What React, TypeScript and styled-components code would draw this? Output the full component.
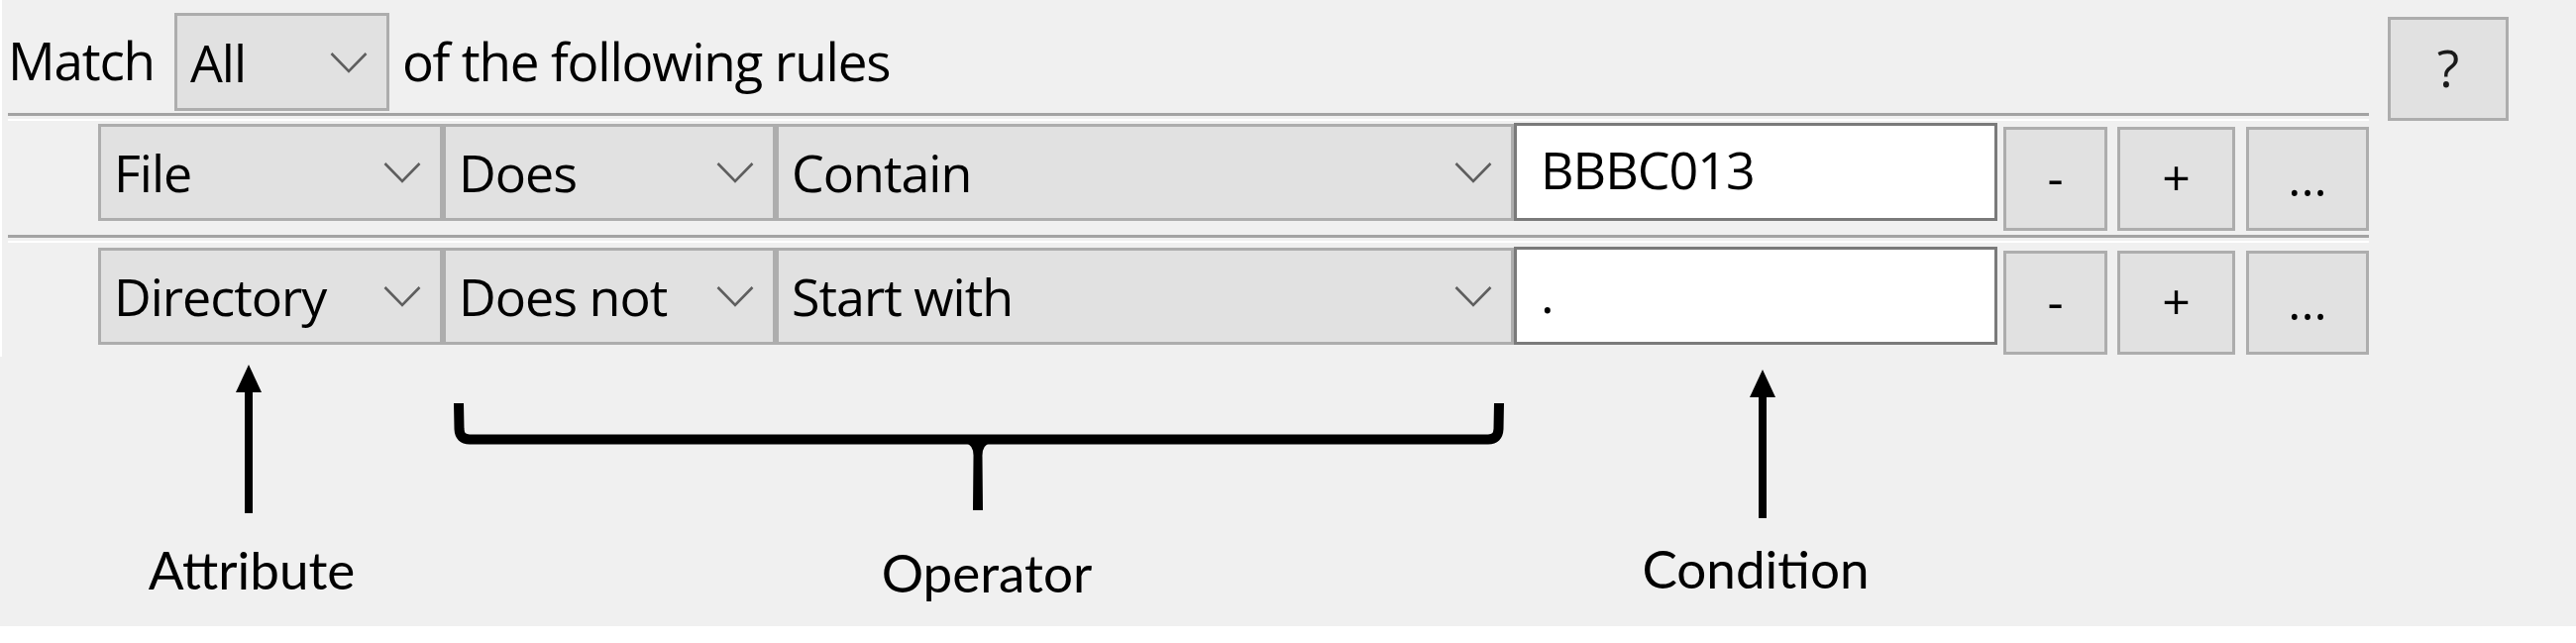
import React from "react";
import styled, { createGlobalStyle } from "styled-components";

const GlobalStyle = createGlobalStyle`
  html, body {
    margin: 0;
    padding: 0;
    background: #ffffff;
  }
  body {
    font-family: "Open Sans", "Noto Sans", sans-serif;
    color: #000;
  }
`;

const Page = styled.div`
  width: 2600px;
  height: 632px;
  background: #f0f0f0;
  display: flex;
  flex-direction: column;
`;

const Dialog = styled.div`
  display: flex;
  align-items: flex-start;
  height: 360px;
  box-sizing: border-box;
  padding: 13px 0 0 6px;
  border-left: 2px solid #ffffff;
`;

const RulesPanel = styled.div`
  width: 2383px;
  display: flex;
  flex-direction: column;
`;

const HeaderRow = styled.div`
  display: flex;
  align-items: center;
  height: 99px;
`;

const UiText = styled.span<{ $ml?: number; $mt?: number }>`
  font-family: "Open Sans", "Noto Sans", sans-serif;
  font-size: 53px;
  letter-spacing: -1.2px;
  line-height: 1;
  white-space: nowrap;
  margin-left: ${(p) => p.$ml ?? 0}px;
  margin-top: ${(p) => p.$mt ?? 0}px;
`;

const Combo = styled.div<{ $w: number; $ml?: number }>`
  box-sizing: border-box;
  width: ${(p) => p.$w}px;
  height: 99px;
  margin-left: ${(p) => p.$ml ?? 0}px;
  flex: none;
  display: flex;
  align-items: center;
  justify-content: space-between;
  padding: 0 19px 0 13px;
  background: #e1e1e1;
  border: 3px solid #adadad;
`;

const RowCombo = styled(Combo)`
  height: 98px;
  margin-top: 1px;
`;

const ComboText = styled.span`
  font-family: "Open Sans", "Noto Sans", sans-serif;
  font-size: 52px;
  letter-spacing: -1px;
  line-height: 1;
  white-space: nowrap;
`;

const Separator = styled.div<{ $mt: number }>`
  box-sizing: border-box;
  height: 8px;
  margin-top: ${(p) => p.$mt}px;
  border-top: 3px solid #a3a3a3;
  border-bottom: 2px solid #ffffff;
`;

const RuleRow = styled.div<{ $mt: number }>`
  display: flex;
  align-items: flex-start;
  height: 110px;
  margin-top: ${(p) => p.$mt}px;
  padding-left: 91px;
`;

const TextField = styled.div`
  box-sizing: border-box;
  width: 488px;
  height: 99px;
  flex: none;
  display: flex;
  align-items: center;
  padding: 0 0 6px 24px;
  background: #ffffff;
  border: 3px solid #7a7a7a;
  font-family: "Open Sans", "Noto Sans", sans-serif;
  font-size: 52px;
  letter-spacing: -1px;
  line-height: 1;
`;

const SmallButton = styled.div<{ $w: number; $ml: number }>`
  box-sizing: border-box;
  width: ${(p) => p.$w}px;
  height: 105px;
  margin-left: ${(p) => p.$ml}px;
  margin-top: 4px;
  flex: none;
  display: flex;
  align-items: center;
  justify-content: center;
  background: #e1e1e1;
  border: 3px solid #adadad;
  font-family: "Open Sans", "Noto Sans", sans-serif;
  font-size: 50px;
  line-height: 1;
  padding-bottom: 4px;
`;

const HelpButton = styled(SmallButton)`
  width: 122px;
  font-size: 52px;
  color: #1a1a1a;
`;

const Annotations = styled.div`
  display: flex;
  align-items: flex-start;
  height: 272px;
  padding-top: 8px;
  box-sizing: border-box;
`;

const Callout = styled.div<{ $w: number; $ml: number; $mt: number }>`
  width: ${(p) => p.$w}px;
  margin-left: ${(p) => p.$ml}px;
  margin-top: ${(p) => p.$mt}px;
  flex: none;
  display: flex;
  flex-direction: column;
  align-items: center;
`;

const Label = styled.div<{ $mt: number; $shift?: number }>`
  font-family: Lato, "Open Sans", sans-serif;
  font-size: 53px;
  line-height: 1;
  white-space: nowrap;
  margin-top: ${(p) => p.$mt}px;
  margin-left: ${(p) => (p.$shift ?? 0) * 2}px;
`;

const Chevron = () => (
  <svg width="38" height="22" viewBox="0 0 38 22">
    <polyline
      points="1.5,2 19,20 36.5,2"
      fill="none"
      stroke="#5e5e5e"
      strokeWidth="2.6"
    />
  </svg>
);

const UpArrow = () => (
  <svg width="28" height="150" viewBox="0 0 28 150">
    <polygon points="14,0 27,28 1,28" fill="#000" />
    <rect x="10" y="26" width="8" height="124" fill="#000" />
  </svg>
);

const Brace = () => (
  <svg width="1064" height="110" viewBox="0 0 1064 110">
    <path
      d="M6,0 L6.5,26 Q7,36.5 17,36.5 L1045,36.5 Q1055,36.5 1055.5,26 L1056,0"
      fill="none"
      stroke="#000"
      strokeWidth="10"
    />
    <path
      d="M517,40 Q526,42 525.5,54 L525,108 L535,108 L534.5,54 Q534,42 543,40 Z"
      fill="#000"
    />
  </svg>
);

type Rule = { attr: string; op: string; match: string; value: string };

const rules: Rule[] = [
  { attr: "File", op: "Does", match: "Contain", value: "BBBC013" },
  { attr: "Directory", op: "Does not", match: "Start with", value: "." },
];

export default function App() {
  return (
    <>
      <GlobalStyle />
      <Page>
        <Dialog>
          <RulesPanel>
            <HeaderRow>
              <UiText $mt={-4}>Match</UiText>
              <Combo $w={217} $ml={20}>
                <ComboText>All</ComboText>
                <Chevron />
              </Combo>
              <UiText $ml={13} $mt={-2}>of the following rules</UiText>
            </HeaderRow>
            {rules.map((r, i) => (
              <React.Fragment key={i}>
                <Separator $mt={i === 0 ? 2 : 3} />
                <RuleRow $mt={i === 0 ? 2 : 4}>
                  <RowCombo $w={348}>
                    <ComboText>{r.attr}</ComboText>
                    <Chevron />
                  </RowCombo>
                  <RowCombo $w={336}>
                    <ComboText>{r.op}</ComboText>
                    <Chevron />
                  </RowCombo>
                  <RowCombo $w={745}>
                    <ComboText>{r.match}</ComboText>
                    <Chevron />
                  </RowCombo>
                  <TextField>{r.value}</TextField>
                  <SmallButton $w={105} $ml={6}>-</SmallButton>
                  <SmallButton $w={119} $ml={10}>+</SmallButton>
                  <SmallButton $w={124} $ml={11}>...</SmallButton>
                </RuleRow>
              </React.Fragment>
            ))}
          </RulesPanel>
          <HelpButton $w={122} $ml={19}>?</HelpButton>
        </Dialog>
        <Annotations>
          <Callout $w={200} $ml={151} $mt={0}>
            <UpArrow />
            <Label $mt={30} $shift={3}>Attribute</Label>
          </Callout>
          <Callout $w={1064} $ml={106} $mt={39}>
            <Brace />
            <Label $mt={34} $shift={7}>Operator</Label>
          </Callout>
          <Callout $w={200} $ml={158} $mt={5}>
            <UpArrow />
            <Label $mt={24} $shift={-7}>Condition</Label>
          </Callout>
        </Annotations>
      </Page>
    </>
  );
}
